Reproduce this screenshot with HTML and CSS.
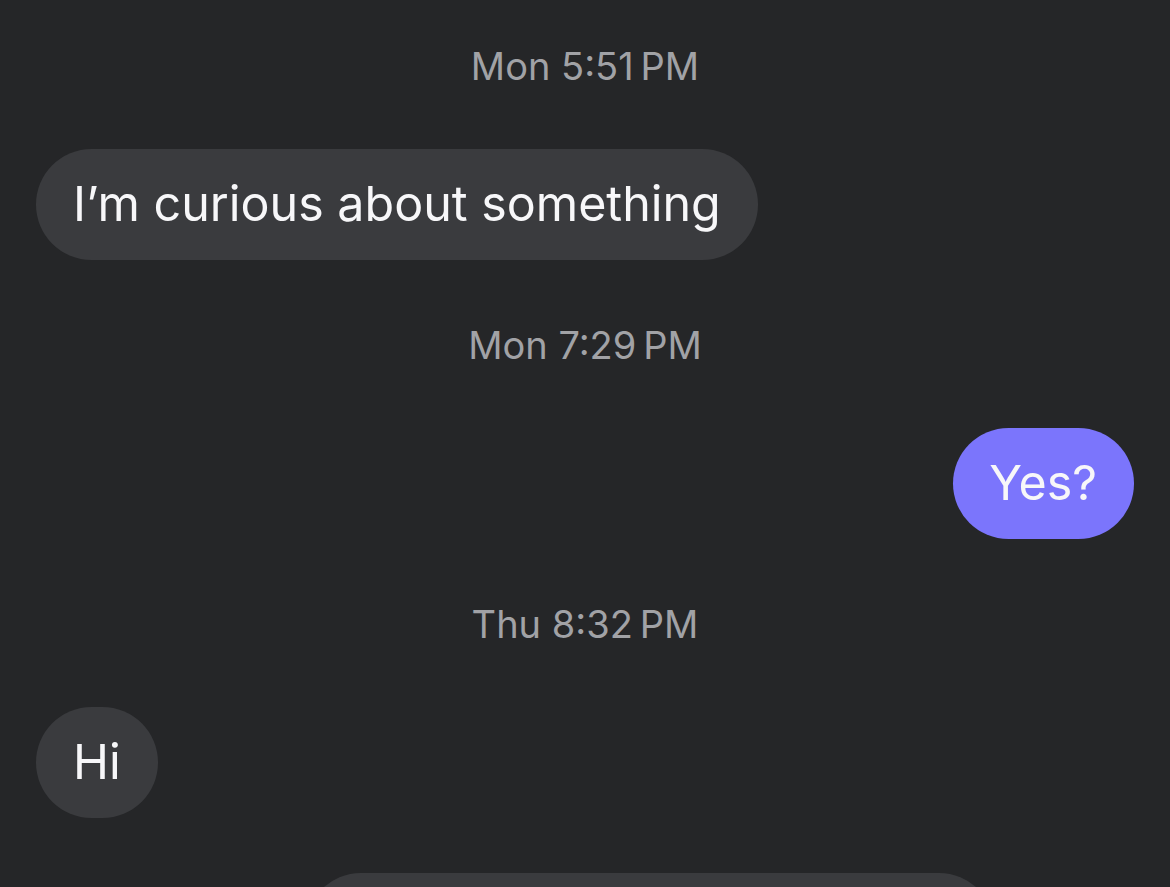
FILE: index.html
```html
<!DOCTYPE html>
<html>
<head>
<meta charset="utf-8">
<link rel="stylesheet" href="styles.css">
</head>
<body>
<div class="thread">
  <div class="stamp">Mon 5:51&#8239;PM</div>
  <div class="row in"><div class="bubble recv">I’m curious about something</div></div>
  <div class="stamp">Mon 7:29&#8239;PM</div>
  <div class="row out"><div class="bubble sent">Yes?</div></div>
  <div class="stamp">Thu 8:32&#8239;PM</div>
  <div class="row in"><div class="bubble recv">Hi</div></div>
  <div class="row card-row"><div class="card"></div></div>
</div>
</body>
</html>
```
FILE: styles.css
```css
html, body {
  margin: 0;
  padding: 0;
  background: #252628;
  height: 887px;
  overflow: hidden;
}
.thread {
  display: flex;
  flex-direction: column;
  padding: 42px 36px 0 36px;
  font-family: Inter, "Noto Sans", sans-serif;
}
.stamp {
  text-align: center;
  color: #a1a2a6;
  font-size: 38px;
  line-height: 48px;
  height: 48px;
  margin-bottom: 59px;
}
.row {
  display: flex;
  margin-bottom: 61px;
}
.row.out { justify-content: flex-end; }
.bubble {
  font-size: 48.4px;
  line-height: 60px;
  padding: 25px 37px 26px 37px;
  border-radius: 56px;
  color: #f7f7f9;
}
.recv { background: #3a3b3e; }
.sent { background: #7b75fc; padding-left: 36px; }
.row.card-row { margin-bottom: 0; margin-top: -6px; padding-left: 269px; }
.card {
  width: 690px;
  height: 120px;
  border-radius: 56px;
  background: #3a3b3e;
}
```
